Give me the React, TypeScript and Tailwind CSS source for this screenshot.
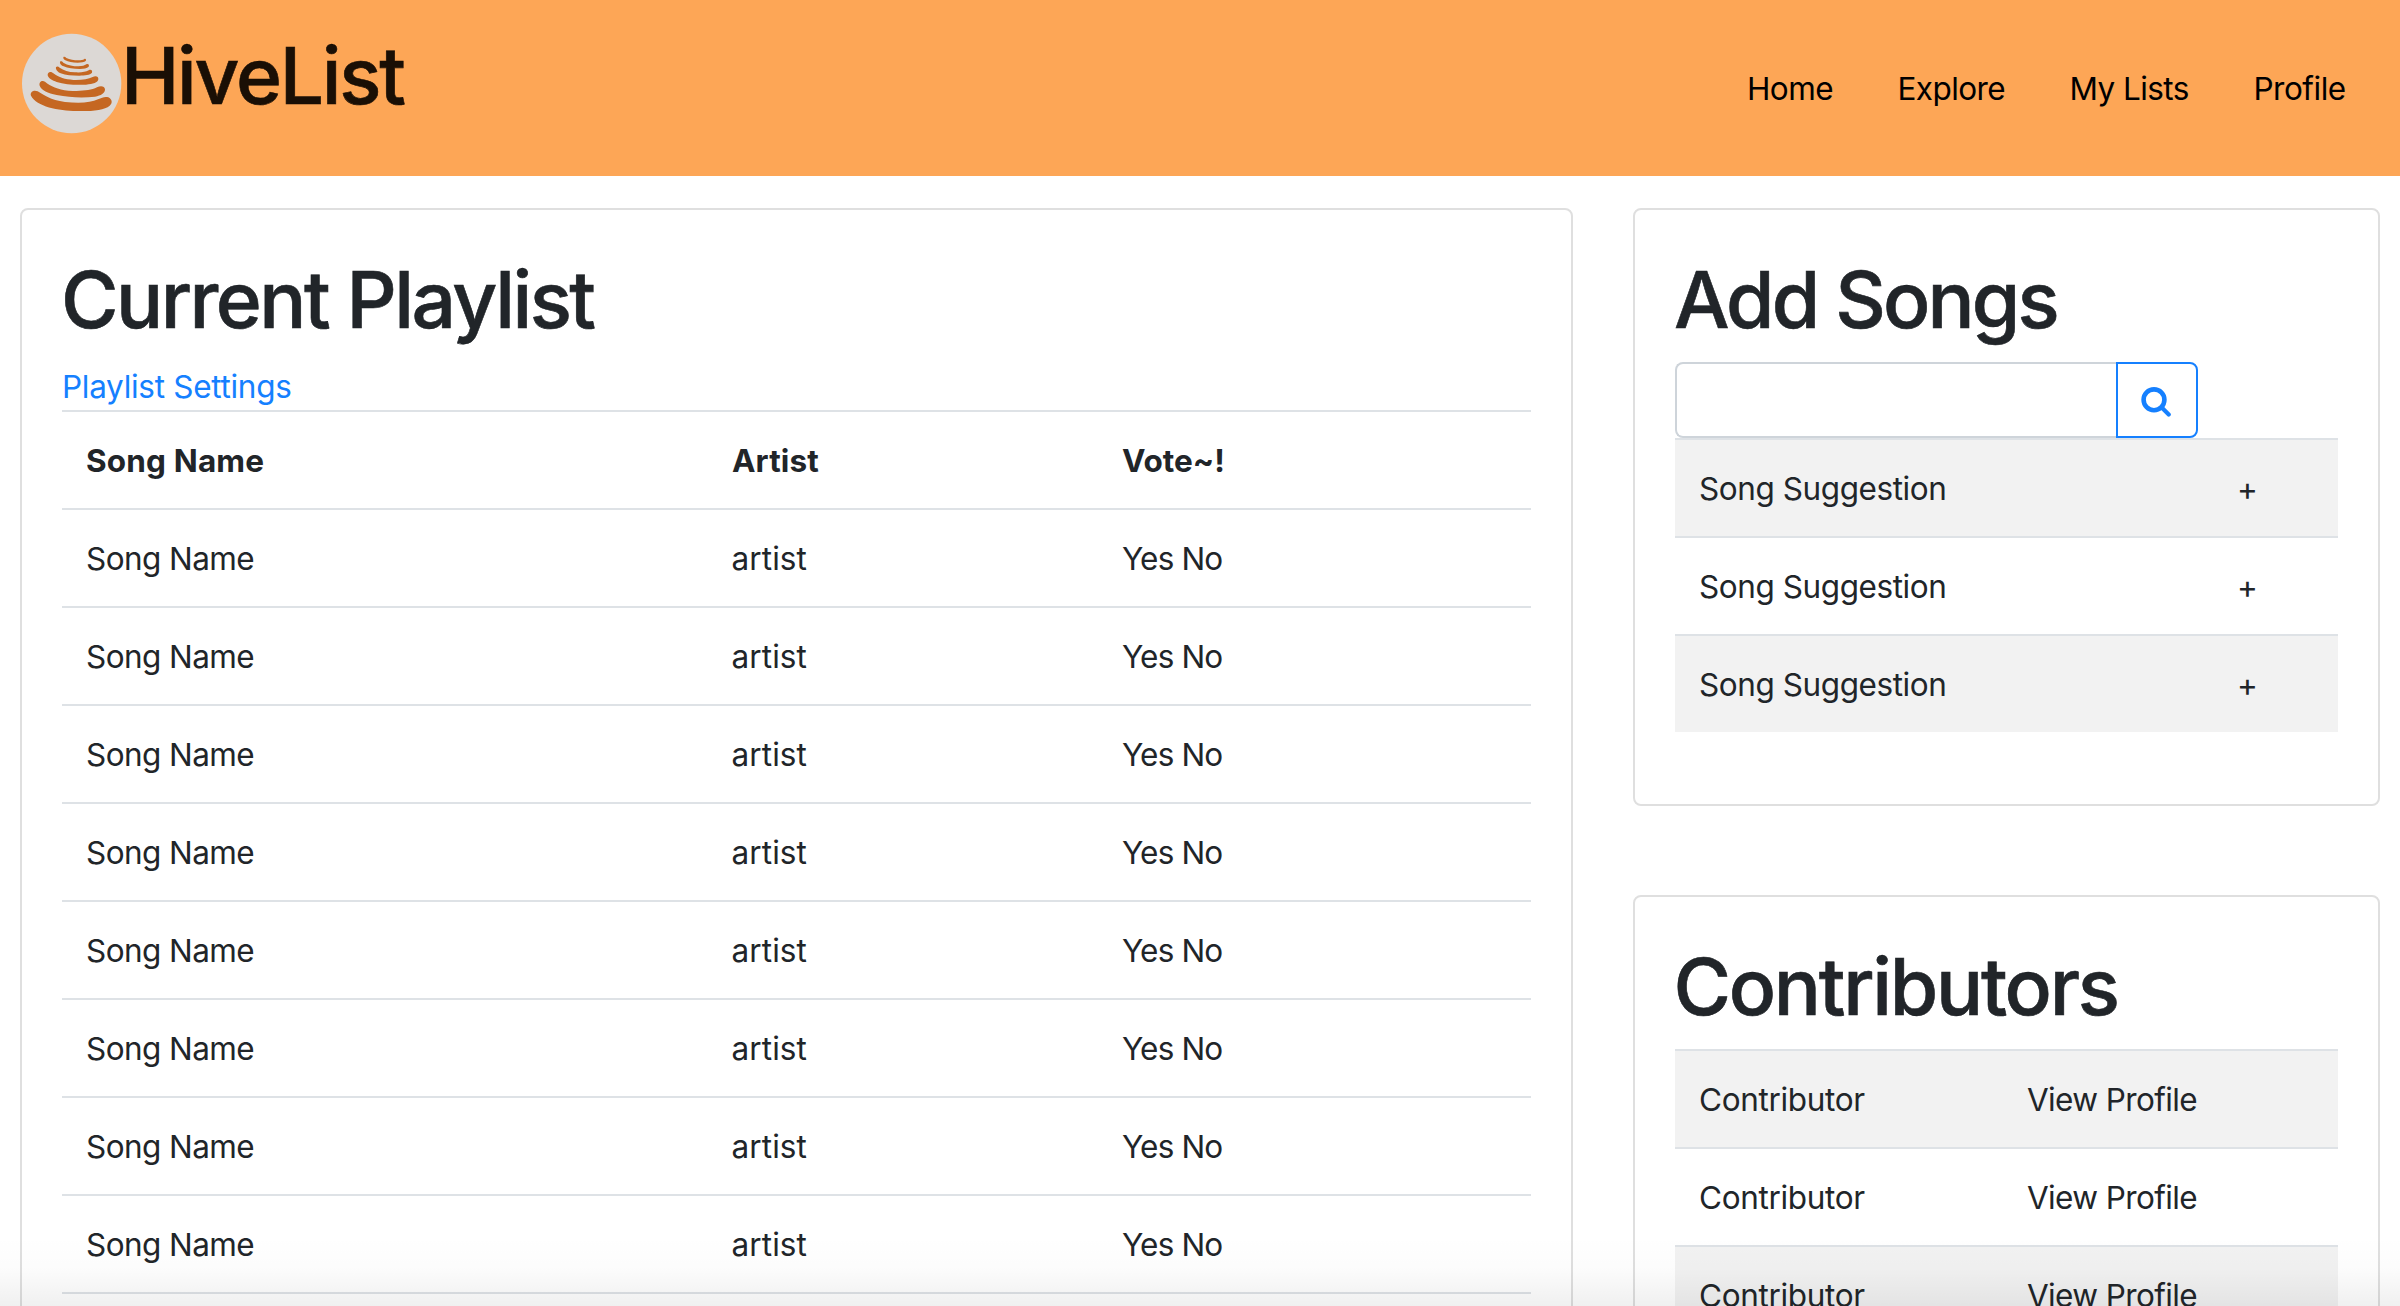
import type { ReactNode } from 'react';

function Logo() {
  return (
    <svg viewBox="0 0 345 345" className="h-[115px] w-[115px] shrink-0" fill="none">
      <circle cx="170" cy="175.5" r="149" fill="#dcd8d5" />
      <g fill="#c56722">
        <path d="M48 212C44 201 56 193 68 199C88 211 105 225 150 231C195 236 228 233 249 223C262 217 270 214 280 217C291 222 294 234 284 242C268 256 230 259 185 258C130 257 65 245 48 212Z" />
        <path d="M74 182C71 171 81 164 90 170C107 184 128 193 160 197C200 199 225 197 246 187C257 181 269 183 270 193C270 205 258 212 240 215C205 219 165 218 125 210C98 204 80 197 74 182Z" />
        <path d="M98 151C97 142 106 137 115 145C132 158 150 163 175 165C200 166 220 162 233 156C243 151 251 155 250 163C248 173 235 177 213 179C180 181 150 178 125 171C112 166 101 161 98 151Z" />
        <path d="M123 131C121 125 128 122 134 128C146 136 160 141 180 142C200 143 211 141 221 136C228 132 233 137 231 143C225 150 210 151 193 152C170 152 153 151 137 145C129 141 125 137 123 131Z" />
        <path d="M135 113C134 108 140 107 145 113C158 121 175 124 190 124C202 124 209 122 214 118C219 115 224 119 221 125C216 130 206 131 195 132C175 132 158 130 146 124C139 121 136 118 135 113Z" />
        <path d="M145 99C144 94 150 94 154 99C164 104 177 106 190 106C198 106 204 105 208 102C212 100 215 104 212 108C208 112 198 113 188 113C172 113 160 110 151 106C147 104 146 102 145 99Z" />
      </g>
    </svg>
  );
}

function SearchIcon() {
  return (
    <svg viewBox="0 0 30 30" className="h-[30px] w-[30px]" fill="none" stroke="currentColor" strokeLinecap="round">
      <circle cx="13" cy="12.800" r="10.400" strokeWidth="4.600" />
      <path d="M20.500 20.300L27.700 27.500" strokeWidth="4.200" />
    </svg>
  );
}

function Card({ className, title, titleTracking, children }: { className: string; title: string; titleTracking: string; children: ReactNode }) {
  return (
    <section className={`rounded-lg border-2 border-[#dfdfdf] bg-white pt-10 ${className}`}>
      <h1 className={`mb-4 h-24 pt-0.5 text-[78.4px] leading-[96px] font-medium whitespace-nowrap [-webkit-text-stroke:0.6px] ${titleTracking}`}>{title}</h1>
      {children}
    </section>
  );
}

const row = 'flex h-[98px] border-t-2 border-[#dee2e6] pt-[25px] whitespace-nowrap';

export default function App() {
  return (
    <div className="relative h-[1306px] overflow-hidden bg-white font-['Inter',sans-serif] text-[31.5px] leading-[48px] text-[#212529]">
      <header className="flex h-44 justify-between bg-[#fda656] text-black">
        <a className="flex pt-[25px] pl-[15px]">
          <Logo />
          <span className="-ml-[9px] pt-[3px] text-[78.4px] leading-[96px] font-medium tracking-[-2.25px] text-[#1a0f05] [-webkit-text-stroke:0.6px]">HiveList</span>
        </a>
        <nav className="flex pt-[65px] whitespace-nowrap">
          <a className="w-[150.5px] tracking-[-0.54px]">Home</a>
          <a className="w-[172px] tracking-[-0.585px]">Explore</a>
          <a className="w-[184px] tracking-[-0.57px]">My Lists</a>
          <a className="w-[146.5px] tracking-[-0.5px]">Profile</a>
        </nav>
      </header>

      <main className="flex items-start pt-8 pl-5">
        <Card className="h-[1200px] w-[1553px] px-10" title="Current Playlist" titleTracking="-ml-px tracking-[-2.51px]">
          <a className="block h-12 pt-px tracking-[-0.29px] text-[#1580ff]">Playlist Settings</a>
          <div className={`${row} pl-6 font-bold`}>
            <span className="w-[646px] tracking-[0.165px]">Song Name</span>
            <span className="w-[390px] tracking-[0.1px]">Artist</span>
            <span className="tracking-[-0.03px]">Vote~!</span>
          </div>
          {Array.from({ length: 8 }, (_, i) => (
            <div key={i} className={`${row} pl-6`}>
              <span className="w-[645.5px] tracking-[-0.58px]">Song Name</span>
              <span className="w-[390.5px] tracking-[0.1px]">artist</span>
              <span className="tracking-[-0.85px]">Yes No</span>
            </div>
          ))}
          <div className="border-t-2 border-[#dee2e6]" />
        </Card>

        <div className="ml-[60px] flex w-[747px] flex-col gap-[89px]">
          <Card className="h-[598px] px-10" title="Add Songs" titleTracking="-ml-px tracking-[-2.88px]">
            <div className="flex h-[76px] w-[523px]">
              <input className="min-w-0 flex-1 rounded-lg rounded-r-none border-2 border-r-0 border-[#ced4da] outline-none" />
              <button className="flex w-[82px] items-center justify-center rounded-r-lg border-2 border-[#1580ff] pt-[3px] pr-[2px] text-[#1580ff]">
                <SearchIcon />
              </button>
            </div>
            <div>
              {[0, 1, 2].map((i) => (
                <div key={i} className={`${row} pl-6 odd:bg-[#f2f2f2]`}>
                  <span className="w-[538px] tracking-[-0.42px]">Song Suggestion</span>
                  <span>+</span>
                </div>
              ))}
            </div>
          </Card>
          <Card className="h-[600px] px-10" title="Contributors" titleTracking="-ml-[1.5px] tracking-[-2.24px]">
            <div>
              {[0, 1, 2].map((i) => (
                <div key={i} className={`${row} pl-6 odd:bg-[#f2f2f2]`}>
                  <span className="w-[328px] tracking-[-0.34px]">Contributor</span>
                  <span className="tracking-[-0.62px]">View Profile</span>
                </div>
              ))}
            </div>
          </Card>
        </div>
      </main>

      <div className="pointer-events-none absolute inset-x-0 bottom-0 h-[70px] bg-linear-to-b from-transparent via-black/[0.015] to-black/[0.06]" />
    </div>
  );
}
